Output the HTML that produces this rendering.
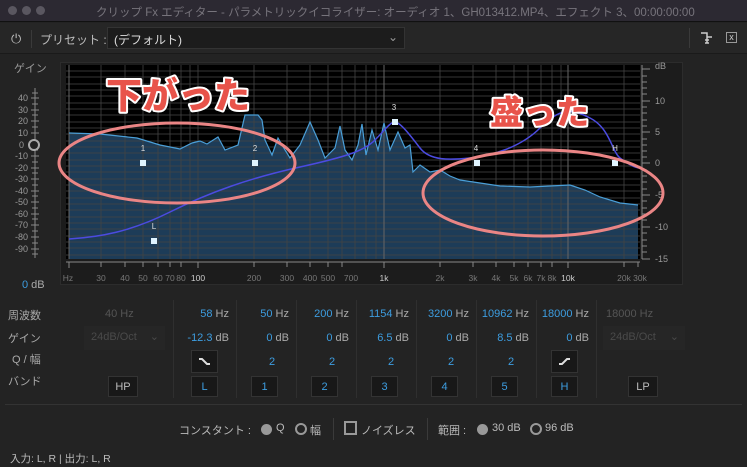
<!DOCTYPE html>
<html><head><meta charset="utf-8"><style>
*{margin:0;padding:0;box-sizing:border-box}
body{width:747px;height:467px;background:#232323;font-family:"Liberation Sans","Noto Sans CJK JP",sans-serif;color:#aaa;font-size:11px;position:relative;overflow:hidden}
.a{position:absolute;white-space:nowrap}
.b{color:#3d9de0}
.btn{position:absolute;width:27px;height:21px;background:#181818;border:1px solid #333;color:#3d9de0;text-align:center;line-height:20px;font-size:11px}
.sep{position:absolute;top:300px;height:98px;width:1px;background:#2f2f2f}
.r{text-align:right;width:60px}
</style></head><body>
<div class="a" style="left:0;top:0;width:747px;height:22px;background:#2c2932;border-bottom:1px solid #111"></div>
<div class="a" style="left:8px;top:6px;width:9px;height:9px;border-radius:50%;background:#5a5760"></div>
<div class="a" style="left:22px;top:6px;width:9px;height:9px;border-radius:50%;background:#5a5760"></div>
<div class="a" style="left:36px;top:6px;width:9px;height:9px;border-radius:50%;background:#5a5760"></div>
<div class="a" style="left:96px;top:4px;color:#77747c;font-size:11.5px">クリップ Fx エディター - パラメトリックイコライザー: オーディオ 1、GH013412.MP4、エフェクト 3、00:00:00:00</div>
<div class="a" style="left:0;top:23px;width:747px;height:31px;background:#262626;border-bottom:1px solid #1a1a1a"></div>
<div class="a" style="left:11px;top:31px;font-size:13px;color:#bbb">⏻</div>
<div class="a" style="left:31px;top:30px;width:1px;height:18px;background:#3a3a3a"></div>
<div class="a" style="left:40px;top:31px;color:#bbb;font-size:12px">プリセット :</div>
<div class="a" style="left:107px;top:27px;width:298px;height:22px;background:#1c1c1c;border:1px solid #333;color:#ddd;font-size:12px;padding:3px 6px">(デフォルト)<span style="position:absolute;right:6px;top:2px;color:#999">⌄</span></div>
<div class="a" style="left:689px;top:28px;width:1px;height:20px;background:#3a3a3a"></div>
<svg class="a" style="left:700px;top:31px" width="14" height="14"><path d="M1 2h6v4h5M7 6v6M5 9h4M5 12h4" stroke="#ccc" stroke-width="1.5" fill="none"/></svg>
<div class="a" style="left:726px;top:32px;width:11px;height:11px;border:1px solid #999;color:#ccc;font-size:9px;line-height:9px;text-align:center">x</div>
<div class="a" style="left:14px;top:60px;color:#999">ゲイン</div>
<div class="a" style="left:60px;top:62px;width:623px;height:223px;background:#1c1c1c;border:1px solid #2c2c2c"></div>
<svg class="a" style="left:0;top:0" width="747" height="300">
<g font-size="9" fill="#999" text-anchor="end" font-family="Liberation Sans">
<text x="28" y="101">40</text><text x="28" y="113">30</text><text x="28" y="124">20</text><text x="28" y="136">10</text><text x="24" y="148">0</text><text x="28" y="159">-10</text><text x="28" y="171">-20</text><text x="28" y="182">-30</text><text x="28" y="194">-40</text><text x="28" y="205">-50</text><text x="28" y="217">-60</text><text x="28" y="228">-70</text><text x="28" y="240">-80</text><text x="28" y="252">-90</text></g>
<g stroke="#888" stroke-width="1"><line x1="35" y1="88" x2="35" y2="258"/>
<path d="M31 98h8M31 110h8M31 121h8M31 133h8M31 156h8M31 168h8M31 179h8M31 191h8M31 202h8M31 214h8M31 225h8M31 237h8M31 249h8M32 93h6M32 104h6M32 115h6M32 127h6M32 150h6M32 162h6M32 173h6M32 185h6M32 196h6M32 208h6M32 219h6M32 231h6M32 243h6M32 254h6"/></g>
<circle cx="34" cy="145" r="5" fill="#232323" stroke="#aaa" stroke-width="2"/>
<rect x="66" y="65" width="574" height="194" fill="#000"/>
<path d="M69 133L100 134L137 138L160 145L180 149L192 143L200 141L207 144L218 137L225 150L238 145L245 115L258 115L262 120L265 140L272 155L278 138L285 150L290 158L300 145L310 122L318 140L325 158L335 148L340 126L345 150L352 160L358 145L362 124L366 155L372 130L378 150L384 123L390 150L398 132L405 148L410 145L413 172L420 165L430 172L440 170L450 176L460 180L480 183L500 186L530 187L570 185L585 190L600 197L620 203L638 205L638 259L69 259Z" fill="#1d3c58"/>
<g stroke="#444" stroke-opacity="0.8" stroke-width="1">
<path d="M66 71H640M66 77H640M66 84H640M66 90H640M66 96H640M66 103H640M66 109H640M66 115H640M66 122H640M66 128H640M66 134H640M66 141H640M66 147H640M66 153H640M66 160H640M66 166H640M66 172H640M66 179H640M66 185H640M66 191H640M66 198H640M66 204H640M66 210H640M66 217H640M66 223H640M66 229H640M66 236H640M66 242H640M66 248H640M66 255H640"/>
<path d="M101 65V259M125 65V259M143 65V259M158 65V259M170 65V259M181 65V259M190 65V259M198 65V259M254 65V259M287 65V259M310 65V259M328 65V259M342 65V259M355 65V259M366 65V259M376 65V259M440 65V259M473 65V259M496 65V259M514 65V259M528 65V259M541 65V259M552 65V259M561 65V259M624 65V259"/></g>
<path d="M69 65V259M384 65V259M568 65V259" stroke="#666"/>
<path d="M69 133L100 134L137 138L160 145L180 149L192 143L200 141L207 144L218 137L225 150L238 145L245 115L258 115L262 120L265 140L272 155L278 138L285 150L290 158L300 145L310 122L318 140L325 158L335 148L340 126L345 150L352 160L358 145L362 124L366 155L372 130L378 150L384 123L390 150L398 132L405 148L410 145L413 172L420 165L430 172L440 170L450 176L460 180L480 183L500 186L530 187L570 185L585 190L600 197L620 203L638 205" fill="none" stroke="#4a9fd8" stroke-width="1.2"/>
<path d="M69 239C100 237 130 232 170 212S250 178 300 167S365 150 375 140S390 122 395 122S410 135 420 148S450 160 470 158S520 148 540 128S570 108 590 118S612 152 620 158S635 168 640 168" fill="none" stroke="#4b4be0" stroke-width="1.5"/>
<g fill="#e0f4ff"><rect x="140" y="160" width="6" height="6"/><rect x="252" y="160" width="6" height="6"/><rect x="151" y="238" width="6" height="6"/><rect x="392" y="119" width="6" height="6"/><rect x="474" y="160" width="6" height="6"/><rect x="612" y="160" width="6" height="6"/></g>
<g fill="#ddd" font-size="8" text-anchor="middle" font-family="Liberation Sans"><text x="143" y="151">1</text><text x="255" y="151">2</text><text x="154" y="229">L</text><text x="394" y="110">3</text><text x="476" y="151">4</text><text x="615" y="151">H</text></g>
<path d="M642 65V259" stroke="#888"/>
<g stroke="#888"><path d="M642 69h8M642 101h8M642 132h8M642 163h8M642 195h8M642 227h8M642 259h8M642 76h5M642 82h5M642 88h5M642 94h5M642 107h5M642 113h5M642 120h5M642 126h5M642 139h5M642 145h5M642 151h5M642 157h5M642 170h5M642 176h5M642 182h5M642 189h5M642 201h5M642 208h5M642 214h5M642 220h5M642 233h5M642 240h5M642 246h5M642 252h5"/></g>
<g fill="#999" font-size="9" font-family="Liberation Sans"><text x="655" y="69">dB</text><text x="655" y="104">10</text><text x="655" y="135">5</text><text x="655" y="166">0</text><text x="655" y="198">-5</text><text x="655" y="230">-10</text><text x="655" y="262">-15</text></g>
<path d="M66 262H640" stroke="#888"/>
<g stroke="#888"><path d="M69 262v6M101 262v5M125 262v5M143 262v5M158 262v5M170 262v5M181 262v5M198 262v6M254 262v5M287 262v5M310 262v5M328 262v5M342 262v5M384 262v6M440 262v5M473 262v5M496 262v5M514 262v5M528 262v5M541 262v5M552 262v5M568 262v6M624 262v5M638 262v5"/></g>
<g fill="#777" font-size="8.5" text-anchor="middle" font-family="Liberation Sans"><text x="68" y="281">Hz</text><text x="101" y="281">30</text><text x="125" y="281">40</text><text x="143" y="281">50</text><text x="158" y="281">60</text><text x="170" y="281">70</text><text x="181" y="281">80</text><text x="198" y="281" fill="#ccc">100</text><text x="254" y="281">200</text><text x="287" y="281">300</text><text x="310" y="281">400</text><text x="328" y="281">500</text><text x="351" y="281">700</text><text x="384" y="281" fill="#ccc">1k</text><text x="440" y="281">2k</text><text x="473" y="281">3k</text><text x="496" y="281">4k</text><text x="514" y="281">5k</text><text x="528" y="281">6k</text><text x="541" y="281">7k</text><text x="552" y="281">8k</text><text x="568" y="281" fill="#ccc">10k</text><text x="624" y="281">20k</text><text x="640" y="281">30k</text></g>
<ellipse cx="177" cy="163" rx="118" ry="40" fill="none" stroke="#ea8585" stroke-width="3"/>
<ellipse cx="543" cy="193" rx="120" ry="43" fill="none" stroke="#ea8585" stroke-width="3"/>
<g font-family="Liberation Sans,Noto Sans CJK JP,sans-serif" font-weight="900" fill="#e8534a" stroke="#fff" stroke-width="4" paint-order="stroke" stroke-linejoin="round">
<text x="106" y="108" font-size="36">下がった</text><text x="490" y="124" font-size="33">盛った</text></g>
</svg>
<div class="a" style="left:22px;top:279px;font-size:11px"><span class="b">0</span> dB</div>
<div class="a" style="left:8px;top:307px">周波数</div>
<div class="a" style="left:8px;top:330px">ゲイン</div>
<div class="a" style="left:12px;top:351px">Q / 幅</div>
<div class="a" style="left:8px;top:373px">バンド</div>
<div class="sep" style="left:173px"></div><div class="sep" style="left:236px"></div><div class="sep" style="left:296px"></div><div class="sep" style="left:356px"></div><div class="sep" style="left:416px"></div><div class="sep" style="left:476px"></div><div class="sep" style="left:536px"></div><div class="sep" style="left:596px"></div>
<div class="a" style="left:105px;top:308px;color:#555">40 Hz</div>
<div class="a" style="left:84px;top:326px;width:81px;height:24px;background:#262626;color:#4a4a4a;padding:5px 7px">24dB/Oct<span style="position:absolute;right:6px;top:4px">⌄</span></div>
<div class="a" style="left:603px;top:326px;width:82px;height:24px;background:#262626;color:#4a4a4a;padding:5px 7px">24dB/Oct<span style="position:absolute;right:6px;top:4px">⌄</span></div>
<div class="a" style="left:606px;top:308px;color:#555">18000 Hz</div>
<div class="a r" style="left:169px;top:308px"><span class="b">58</span> Hz</div>
<div class="a r" style="left:229px;top:308px"><span class="b">50</span> Hz</div>
<div class="a r" style="left:289px;top:308px"><span class="b">200</span> Hz</div>
<div class="a r" style="left:349px;top:308px"><span class="b">1154</span> Hz</div>
<div class="a r" style="left:409px;top:308px"><span class="b">3200</span> Hz</div>
<div class="a r" style="left:469px;top:308px"><span class="b">10962</span> Hz</div>
<div class="a r" style="left:529px;top:308px"><span class="b">18000</span> Hz</div>
<div class="a r" style="left:169px;top:332px"><span class="b">-12.3</span> dB</div>
<div class="a r" style="left:229px;top:332px"><span class="b">0</span> dB</div>
<div class="a r" style="left:289px;top:332px"><span class="b">0</span> dB</div>
<div class="a r" style="left:349px;top:332px"><span class="b">6.5</span> dB</div>
<div class="a r" style="left:409px;top:332px"><span class="b">0</span> dB</div>
<div class="a r" style="left:469px;top:332px"><span class="b">8.5</span> dB</div>
<div class="a r" style="left:529px;top:332px"><span class="b">0</span> dB</div>
<div class="btn" style="left:191px;top:350px;height:23px"><svg width="25" height="21"><path d="M7 8h3l5 5h3" stroke="#ddd" stroke-width="2" fill="none"/></svg></div>
<div class="btn" style="left:551px;top:350px;height:23px"><svg width="25" height="21"><path d="M7 13h3l5-5h3" stroke="#ddd" stroke-width="2" fill="none"/></svg></div>
<div class="a b" style="left:269px;top:356px">2</div><div class="a b" style="left:329px;top:356px">2</div><div class="a b" style="left:388px;top:356px">2</div><div class="a b" style="left:448px;top:356px">2</div><div class="a b" style="left:508px;top:356px">2</div>
<div class="btn" style="left:108px;top:376px;width:30px;color:#bbb">HP</div>
<div class="btn" style="left:191px;top:376px">L</div>
<div class="btn" style="left:251px;top:376px">1</div>
<div class="btn" style="left:311px;top:376px">2</div>
<div class="btn" style="left:371px;top:376px">3</div>
<div class="btn" style="left:431px;top:376px">4</div>
<div class="btn" style="left:491px;top:376px">5</div>
<div class="btn" style="left:551px;top:376px">H</div>
<div class="btn" style="left:628px;top:376px;width:30px;color:#bbb">LP</div>
<div class="a" style="left:5px;top:404px;width:737px;height:1px;background:#333"></div>
<div class="a" style="left:179px;top:422px;color:#bbb">コンスタント :</div>
<div class="a" style="left:261px;top:424px;width:11px;height:11px;border-radius:50%;background:#999"></div>
<div class="a" style="left:276px;top:422px;color:#bbb">Q</div>
<div class="a" style="left:295px;top:423px;width:12px;height:12px;border-radius:50%;border:2px solid #999"></div>
<div class="a" style="left:310px;top:422px;color:#bbb">幅</div>
<div class="a" style="left:333px;top:418px;width:1px;height:22px;background:#3a3a3a"></div>
<div class="a" style="left:344px;top:421px;width:13px;height:14px;border:2px solid #999"></div>
<div class="a" style="left:361px;top:422px;color:#bbb">ノイズレス</div>
<div class="a" style="left:427px;top:418px;width:1px;height:22px;background:#3a3a3a"></div>
<div class="a" style="left:438px;top:422px;color:#bbb">範囲 :</div>
<div class="a" style="left:477px;top:424px;width:11px;height:11px;border-radius:50%;background:#999"></div>
<div class="a" style="left:492px;top:422px;color:#bbb">30 dB</div>
<div class="a" style="left:530px;top:423px;width:12px;height:12px;border-radius:50%;border:2px solid #999"></div>
<div class="a" style="left:545px;top:422px;color:#bbb">96 dB</div>
<div class="a" style="left:10px;top:451px;color:#bbb;font-size:10.5px">入力: L, R | 出力: L, R</div>
</body></html>
